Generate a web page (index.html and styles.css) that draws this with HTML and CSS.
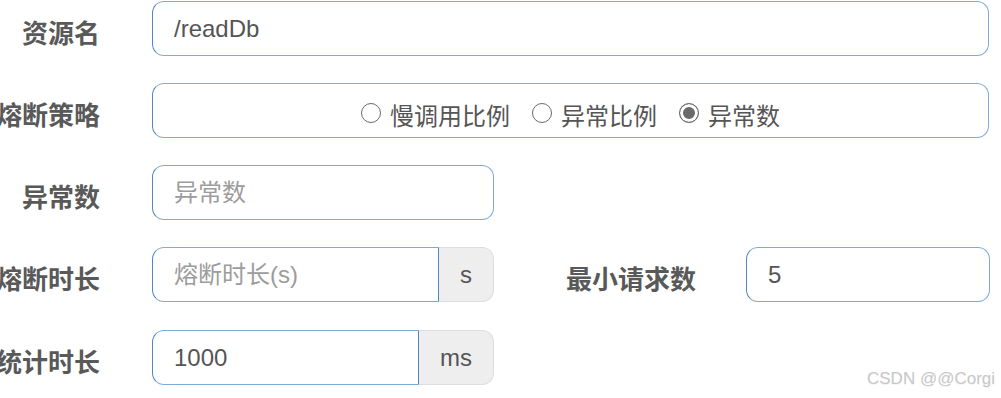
FILE: index.html
```html
<!DOCTYPE html>
<html>
<head>
    <meta charset="utf-8">
    <title>熔断规则</title>
    <link rel="stylesheet" href="styles.css">
</head>
<body>
    <form class="rule-form">
        <div class="form-row">
            <label class="form-label"><span>资源名</span></label>
            <input type="text" class="form-input wide" value="/readDb">
        </div>

        <div class="form-row">
            <label class="form-label"><span>熔断策略</span></label>
            <div class="form-input wide radio-box">
                <label class="radio"><input type="radio" name="grade"> 慢调用比例</label>
                <label class="radio"><input type="radio" name="grade"> 异常比例</label>
                <label class="radio"><input type="radio" name="grade" checked> 异常数</label>
            </div>
        </div>

        <div class="form-row">
            <label class="form-label"><span>异常数</span></label>
            <input type="text" class="form-input half" placeholder="异常数">
        </div>

        <div class="form-row">
            <label class="form-label"><span>熔断时长</span></label>
            <div class="input-group half">
                <input type="text" class="form-input" placeholder="熔断时长(s)">
                <span class="addon">s</span>
            </div>
            <label class="form-label second"><span>最小请求数</span></label>
            <input type="text" class="form-input small" value="5">
        </div>

        <div class="form-row">
            <label class="form-label"><span>统计时长</span></label>
            <div class="input-group half">
                <input type="text" class="form-input" value="1000">
                <span class="addon">ms</span>
            </div>
        </div>
    </form>

    <div class="watermark">CSDN @@Corgi</div>
</body>
</html>
```

FILE: styles.css
```css
html, body { margin: 0; height: 398px; overflow: hidden; background: #fff; }
body {
    font-family: "Liberation Sans", "Noto Sans CJK SC", sans-serif;
    color: #555;
    position: relative;
}
.rule-form {
    display: flex;
    flex-direction: column;
    gap: 27px;
    padding-top: 1px;
}
.form-row {
    display: flex;
    align-items: center;
    height: 55px;
}
.form-row:last-child { margin-top: 1px; }
.form-label {
    width: 100px;
    flex: none;
    display: flex;
    justify-content: flex-end;
    white-space: nowrap;
    font-size: 26px;
    font-weight: bold;
    color: #595959;
    padding-top: 6px;
    margin-right: 52px;
}
.form-label.second {
    width: 202px;
    margin-right: 50px;
}
.form-input {
    box-sizing: border-box;
    height: 55px;
    margin: 0;
    padding: 0 21px;
    font-family: inherit;
    font-size: 24px;
    color: #555;
    background: #fff;
    border: 1.5px solid #7eaad8;
    border-left-color: #4f87c4;
    border-radius: 12px;
    outline: none;
}
.form-input::placeholder { color: #9c9c9c; }
.wide { width: 837px; }
.half { width: 342px; }
.small { width: 244px; }

.radio-box {
    display: flex;
    align-items: center;
    justify-content: center;
    gap: 22px;
    padding-top: 8px;
}
.radio {
    display: flex;
    align-items: center;
    gap: 9px;
    white-space: nowrap;
}
.radio input {
    appearance: none;
    -webkit-appearance: none;
    width: 20px;
    height: 20px;
    margin: 0 0 3px 0;
    border: 1.5px solid #6a6a6a;
    border-radius: 50%;
    background: #fff;
}
.radio input:checked {
    background: #6a6a6a;
    box-shadow: inset 0 0 0 3px #fff;
}

.input-group {
    display: flex;
    height: 55px;
}
.input-group .form-input {
    flex: 1;
    min-width: 0;
    border-radius: 12px 0 0 12px;
    border-right-color: #4f87c4;
}
.addon {
    display: flex;
    align-items: center;
    padding: 0 21px;
    font-size: 24px;
    color: #555;
    background: #eee;
    border: 1.5px solid #ddd;
    border-left: none;
    border-radius: 0 12px 12px 0;
}

.watermark {
    position: absolute;
    left: 867px;
    top: 369px;
    font-size: 17px;
    color: #c8c8c8;
    text-shadow: 0 1px 0 #f4f4f4;
    white-space: nowrap;
}
```
